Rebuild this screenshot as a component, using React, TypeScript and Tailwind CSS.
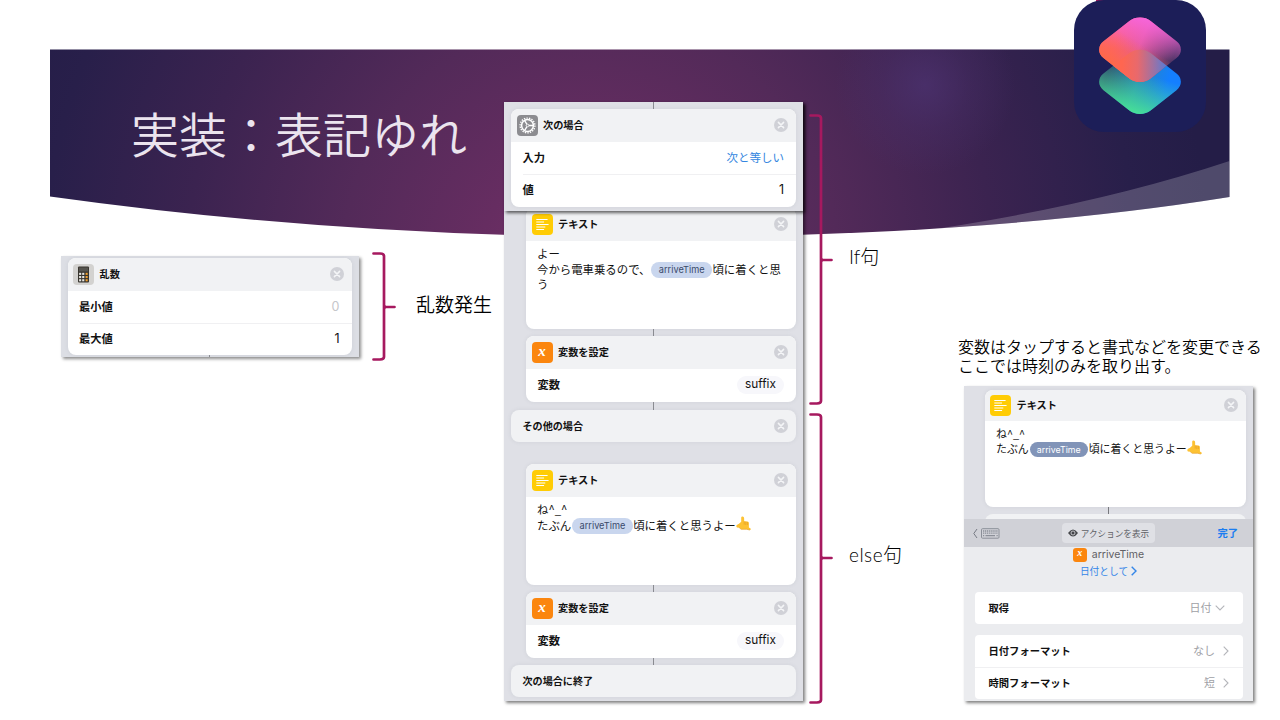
import type { ReactNode } from "react";

function CloseDot() {
  return (
    <svg className="-mt-px h-[14px] w-[14px] shrink-0" viewBox="0 0 14 14">
      <circle cx="7" cy="7" r="7" fill="#d0d1d7" />
      <path d="M4.400 4.400 9.600 9.600M9.600 4.400 4.400 9.600" stroke="#f4f5f7" strokeWidth="1.500" strokeLinecap="round" />
    </svg>
  );
}

function CalcIcon() {
  return (
    <svg className="h-[21px] w-[21px] shrink-0" viewBox="0 0 21 21">
      <rect width="21" height="21" rx="4" fill="#d3d2d0" />
      <rect x="5" y="2.5" width="11" height="16" rx="1" fill="#38352f" />
      <rect x="6" y="3.5" width="9" height="4" fill="#55534e" />
      {[8.8, 12, 15.2].map((y) => (
        <g key={y}>
          <rect x="6.1" y={y} width="2.1" height="2.1" fill="#e8e6e2" />
          <rect x="9.2" y={y} width="2.1" height="2.1" fill="#e8e6e2" />
          <rect x="12.6" y={y} width="2.1" height="2.1" fill="#f0a030" />
        </g>
      ))}
    </svg>
  );
}

function GearIcon() {
  return (
    <svg className="h-[21px] w-[21px] shrink-0" viewBox="0 0 21 21" fill="none" stroke="#fff">
      <rect width="21" height="21" rx="4" fill="#8c8c90" stroke="none" />
      <circle cx="10.5" cy="10.5" r="7.400" strokeWidth="1.400" strokeDasharray="1.400 1.180" />
      <circle cx="10.5" cy="10.5" r="5.900" strokeWidth="1.500" />
      <circle cx="10.5" cy="10.5" r="1.300" strokeWidth=".9" />
      <path d="M12 10.500h4.200M9.800 9.200 7.500 5.300M9.800 11.800l-2.300 3.900" strokeWidth="1.300" />
    </svg>
  );
}

function TextIcon() {
  return (
    <svg className="h-[21px] w-[21px] shrink-0" viewBox="0 0 21 21">
      <rect width="21" height="21" rx="4" fill="#ffcc05" />
      <path
        d="M4.700 5.500h10.500M4.700 8h7M4.700 10.500h11.500M4.700 13h8.200M4.700 15.500h7"
        stroke="#fff"
        strokeWidth="1"
        strokeLinecap="round"
      />
    </svg>
  );
}

function VarIcon({ small = false }: { small?: boolean }) {
  return (
    <span
      className={
        small
          ? "flex h-[14px] w-[14px] shrink-0 items-center justify-center rounded-[3px] bg-[#fb860e] font-['Liberation_Serif',serif] text-[10px] leading-none font-bold text-white italic"
          : "flex h-[21px] w-[21px] shrink-0 items-center justify-center rounded-[4px] bg-[#fb860e] font-['Liberation_Serif',serif] text-[15px] leading-none font-bold text-white italic"
      }
    >
      <span className="-mt-[3px]">x</span>
    </span>
  );
}

function HandIcon() {
  return (
    <svg className="-mt-[6px] inline-block h-[15px] w-[15px] align-middle" viewBox="0 0 15 15">
      <path
        d="M5.200 5.800V1.500Q5.300.3 6.700.4 8 .6 8.100 2L8.200 5.200 11.500 5.400Q12.900 5.600 12.900 7V11.500L14.600 12.500Q15.200 13.800 14 14L10.600 13.300H5.200L3.300 11.800 1 11.400Q.2 11 .4 9.800.5 8.800 1.700 8.500L3 7.800Z"
        fill="#fdc233"
      />
      <path d="M8.200 5.400V8.600M9.800 5.600V9M11.400 6V9M3.300 11.800 5.200 13.300H10.600L14 14" stroke="#e39a22" strokeWidth=".6" fill="none" />
    </svg>
  );
}

function Bracket({ height, nib }: { height: number; nib: number }) {
  return (
    <svg width="24" height={height} viewBox={`0 0 24 ${height}`} className="block shrink-0" fill="none">
      <path
        d={`M1.500 1.500H8Q12 1.700 12 4V${height - 4}Q12 ${height - 1.7} 8 ${height - 1.5}H1.500M12 ${nib}H22.500`}
        stroke="#a6195f"
        strokeWidth="2.700"
        strokeLinecap="round"
      />
      <path d={`M12 ${nib - 4}Q13 ${nib} 18 ${nib}Q13 ${nib} 12 ${nib + 4}Z`} fill="#a6195f" />
    </svg>
  );
}

function Header({ icon, title, compact = false }: { icon: ReactNode; title: string; compact?: boolean }) {
  return (
    <div
      className={
        compact
          ? "flex h-[31px] items-center bg-[#f1f2f4] pr-[8px] pl-[5px]"
          : "flex h-[33px] items-center bg-[#f1f2f4] pr-[8px] pl-[5.500px]"
      }
    >
      {icon}
      <span className="-mt-[2px] ml-[5.500px] flex-1 text-[10.200px] font-bold">{title}</span>
      <CloseDot />
    </div>
  );
}

function Card({
  children,
  tone = "bg-white",
  className = "",
}: {
  children: ReactNode;
  tone?: string;
  className?: string;
}) {
  return (
    <div className={`shrink-0 overflow-hidden rounded-[8px] shadow-[0_0_4px_rgba(80,85,110,0.10)] ${tone} ${className}`}>
      {children}
    </div>
  );
}

function Row({ label, children }: { label: string; children: ReactNode }) {
  return (
    <div className="flex h-[32px] items-center justify-between pr-[12px] pl-[11.500px]">
      <span className="-mt-[2px] text-[11.300px] font-bold">{label}</span>
      {children}
    </div>
  );
}

function Link({ className = "h-[7px]" }: { className?: string }) {
  return <div className={`ml-[149px] w-px shrink-0 bg-[#8b8c92] ${className}`} />;
}

function Pill() {
  return (
    <span className="-mt-[2px] mr-[.5px] ml-[1px] inline-flex h-[16px] w-[60.500px] items-center justify-center rounded-full bg-[#c9d6ee] align-middle font-[Inter,sans-serif] text-[9.200px] text-[#394a6b]">
      arriveTime
    </span>
  );
}

function SetVariable() {
  return (
    <Card className="ml-[22px] h-[66px] w-[270px]">
      <Header icon={<VarIcon />} title="変数を設定" />
      <Row label="変数">
        <span className="-mt-px flex h-[18px] w-[47px] items-center justify-center rounded-full bg-[#f7f7fb] font-[Inter,sans-serif] text-[11.800px]">
          suffix
        </span>
      </Row>
    </Card>
  );
}

function Banner() {
  return (
    <svg className="absolute inset-0 h-[720px] w-[1280px]" viewBox="0 0 1280 720">
      <defs>
        <radialGradient id="base" gradientUnits="userSpaceOnUse" cx="590" cy="265" r="620">
          <stop offset="0" stopColor="#763269" />
          <stop offset=".18" stopColor="#662d61" />
          <stop offset=".4" stopColor="#532a59" />
          <stop offset=".65" stopColor="#3b2350" />
          <stop offset=".88" stopColor="#281f4a" />
          <stop offset="1" stopColor="#241d47" />
        </radialGradient>
        <radialGradient id="glow" gradientUnits="userSpaceOnUse" cx="925" cy="85" r="90">
          <stop offset="0" stopColor="#4c3270" stopOpacity=".75" />
          <stop offset=".5" stopColor="#4c3270" stopOpacity=".3" />
          <stop offset="1" stopColor="#4c3270" stopOpacity="0" />
        </radialGradient>
        <clipPath id="shape">
          <path d="M50 49.500H1229.500V197Q980 237 640 237Q340 237 50 196.500Z" />
        </clipPath>
      </defs>
      <g clipPath="url(#shape)">
        <rect x="50" y="49" width="1180" height="190" fill="url(#base)" />
        <rect x="830" y="49" width="190" height="130" fill="url(#glow)" />
        <path d="M1229.500 161Q1085 209 900 234L1229.500 234Z" fill="#fff" fillOpacity=".2" />
      </g>
    </svg>
  );
}

function ShortcutsLogo() {
  return (
    <svg className="absolute top-0 left-[1074px] h-[132px] w-[132px]" viewBox="0 0 132 132">
      <defs>
        <linearGradient id="top" gradientUnits="userSpaceOnUse" x1="42" y1="40" x2="98" y2="62">
          <stop offset="0" stopColor="#fc5f74" />
          <stop offset=".4" stopColor="#e35a9a" />
          <stop offset="1" stopColor="#4d3464" />
        </linearGradient>
        <linearGradient id="pink" gradientUnits="userSpaceOnUse" x1="70" y1="17" x2="62" y2="54">
          <stop offset="0" stopColor="#f765dc" />
          <stop offset="1" stopColor="#f765dc" stopOpacity="0" />
        </linearGradient>
        <linearGradient id="orange" gradientUnits="userSpaceOnUse" x1="46" y1="72" x2="64" y2="42">
          <stop offset="0" stopColor="#ff6a45" />
          <stop offset="1" stopColor="#ff6a45" stopOpacity="0" />
        </linearGradient>
        <linearGradient id="bottom" gradientUnits="userSpaceOnUse" x1="36" y1="66" x2="94" y2="84">
          <stop offset="0" stopColor="#2f5070" />
          <stop offset=".5" stopColor="#2888b8" />
          <stop offset="1" stopColor="#147fff" />
        </linearGradient>
        <linearGradient id="green" gradientUnits="userSpaceOnUse" x1="60" y1="114" x2="72" y2="74">
          <stop offset="0" stopColor="#48e296" />
          <stop offset="1" stopColor="#48e296" stopOpacity="0" />
        </linearGradient>
        <linearGradient id="overlap" gradientUnits="userSpaceOnUse" x1="48" y1="66" x2="92" y2="66">
          <stop offset="0" stopColor="#ff6650" />
          <stop offset=".35" stopColor="#e9696c" />
          <stop offset=".7" stopColor="#a271a0" />
          <stop offset="1" stopColor="#5a7bd4" />
        </linearGradient>
        <clipPath id="upper">
          <rect x="-33.300" y="-33.300" width="66.600" height="66.600" rx="15" transform="translate(66 49.700) scale(1 .786) rotate(45)" />
        </clipPath>
        <clipPath id="lower">
          <rect x="-33.300" y="-33.300" width="66.600" height="66.600" rx="15" transform="translate(66 81.800) scale(1 .786) rotate(45)" />
        </clipPath>
      </defs>
      <rect x="22" y="0" width="20" height="8" fill="#a6195f" />
      <rect width="132" height="132" rx="30" fill="#1c1e58" />
      <g clipPath="url(#lower)">
        <rect x="20" y="45" width="92" height="74" fill="url(#bottom)" />
        <rect x="20" y="45" width="92" height="74" fill="url(#green)" />
      </g>
      <g clipPath="url(#upper)">
        <rect x="20" y="12" width="92" height="74" fill="url(#top)" />
        <rect x="20" y="12" width="92" height="74" fill="url(#pink)" />
        <rect x="20" y="12" width="92" height="74" fill="url(#orange)" />
        <g clipPath="url(#lower)">
          <rect x="20" y="45" width="92" height="45" fill="url(#overlap)" />
        </g>
      </g>
    </svg>
  );
}

function Chevron({ down = false }: { down?: boolean }) {
  return down ? (
    <svg className="h-[6px] w-[10px]" viewBox="0 0 10 6" fill="none" stroke="#b4b5ba" strokeWidth="1.100">
      <path d="M.7.7 5 5 9.300.7" />
    </svg>
  ) : (
    <svg className="h-[10px] w-[6px]" viewBox="0 0 6 10" fill="none" stroke="#b4b5ba" strokeWidth="1.100">
      <path d="M.7.7 5 5 .7 9.300" />
    </svg>
  );
}

function FormatRow({ label, value, down = false }: { label: string; value: string; down?: boolean }) {
  return (
    <div className="flex h-[32px] items-center pl-[13.500px]">
      <span className="flex-1 text-[10.300px] font-bold">{label}</span>
      <span className="-mt-px text-[11px] text-[#a0a1a6]">{value}</span>
      <span className={down ? "mr-[18px] ml-[3.500px]" : "mr-[14px] ml-[8px]"}>
        <Chevron down={down} />
      </span>
    </div>
  );
}

function RandomPanel() {
  return (
    <div className="mt-[4px] h-[101px] w-[298px] overflow-hidden bg-[#dcdee4] px-[6.500px] pt-[2px] shadow-[2px_2px_3px_rgba(0,0,0,0.45)]">
      <Card className="h-[97px] w-[284px]">
        <Header icon={<CalcIcon />} title="乱数" />
        <Row label="最小値">
          <span className="font-[Inter,sans-serif] text-[12.500px] text-[#c5c6ca]">0</span>
        </Row>
        <div className="-mb-px ml-[12px] h-px bg-[#f0f0f2]" />
        <Row label="最大値">
          <span className="font-[Inter,sans-serif] text-[12.500px]">1</span>
        </Row>
      </Card>
      <div className="ml-[141px] h-[2px] w-px bg-[#8b8c92]" />
    </div>
  );
}

function ShortcutPanel() {
  return (
    <div className="flex h-[599px] w-[299px] flex-col bg-[#dfe0e6] shadow-[2px_2px_3px_rgba(0,0,0,0.5)]">
      <div className="z-10 h-[109px] shrink-0 bg-[#dfe0e6] shadow-[2px_2px_3px_rgba(0,0,0,0.6)]">
        <Link />
        <Card className="ml-[7px] h-[98px] w-[285px]">
          <Header icon={<GearIcon />} title="次の場合" />
          <Row label="入力">
            <span className="text-[11.500px] text-[#3486e0]">次と等しい</span>
          </Row>
          <div className="-mb-px ml-[12px] h-px bg-[#f0f0f2]" />
          <Row label="値">
            <span className="font-[Inter,sans-serif] text-[12.500px]">1</span>
          </Row>
        </Card>
      </div>
      <div className="flex h-[490px] flex-col overflow-hidden">
        <Card className="-mt-[3px] ml-[22px] h-[121px] w-[270px]">
          <Header icon={<TextIcon />} title="テキスト" />
          <div className="pt-[5px] pl-[11px] text-[11.400px] leading-[15.700px] whitespace-nowrap">
            <div className="h-[15.700px]">よー</div>
            <div className="h-[15.700px]">
              今から電車乗るので、
              <Pill />
              頃に着くと思
            </div>
            <div>う</div>
          </div>
        </Card>
        <Link />
        <SetVariable />
        <Link className="h-[8px]" />
        <Card
          tone="bg-[#f1f2f4]"
          className="ml-[7px] flex h-[32px] w-[285px] items-center justify-between pr-[8px] pl-[11.500px] text-[10.100px] font-bold"
        >
          <span>その他の場合</span>
          <CloseDot />
        </Card>
        <Card className="mt-[22px] ml-[22px] h-[121px] w-[270px]">
          <Header icon={<TextIcon />} title="テキスト" />
          <div className="pt-[5px] pl-[11px] text-[11.400px] leading-[15.700px] whitespace-nowrap">
            <div className="h-[15.700px]">ね^_^</div>
            <div className="h-[15.700px]">
              たぶん
              <Pill />
              頃に着くと思うよー
              <HandIcon />
            </div>
          </div>
        </Card>
        <Link />
        <SetVariable />
        <Link />
        <Card
          tone="bg-[#f1f2f4]"
          className="ml-[7px] flex h-[32px] w-[285px] items-center pl-[11.500px] text-[10.100px] font-bold"
        >
          次の場合に終了
        </Card>
      </div>
    </div>
  );
}

function VariablePanel() {
  return (
    <div className="mt-[10px] ml-[6px] flex h-[315px] w-[289px] flex-col bg-[#ebecef] shadow-[2px_2px_3px_rgba(0,0,0,0.5)]">
      <div className="h-[133px] shrink-0 overflow-hidden bg-[#dfe0e6] pt-[4px]">
        <Card className="ml-[21px] h-[117px] w-[261px]">
          <Header compact icon={<TextIcon />} title="テキスト" />
          <div className="pt-[5px] pl-[11px] text-[10.900px] leading-[15px] whitespace-nowrap">
            <div className="h-[15px]">ね^_^</div>
            <div className="h-[15px]">
              たぶん
              <span className="-mt-[2px] mx-[1px] inline-flex h-[15px] w-[58px] items-center justify-center rounded-full bg-[#8194b8] align-middle font-[Inter,sans-serif] text-[8.800px] text-white">
                arriveTime
              </span>
              頃に着くと思うよー
              <HandIcon />
            </div>
          </div>
        </Card>
        <div className="ml-[144px] h-[7px] w-px bg-[#77787d]" />
        <div className="ml-[21px] h-[20px] w-[261px] rounded-[8px] bg-[#f1f2f4]" />
      </div>
      <div className="flex h-[28px] shrink-0 items-center bg-[#d0d1d7] pr-[15px] pl-[9px]">
        <svg className="h-[11px] w-[27px]" viewBox="0 0 27 11" fill="none" stroke="#8b8f98">
          <path d="M4 1 .8 5.500 4 10" stroke="#777b84" />
          <rect x="8.500" y=".7" width="17.500" height="9.500" rx="1" />
          <path d="M10 3h15M10 5.200h15" strokeDasharray="1.200 .7" strokeWidth="1.300" />
          <path d="M10 7.700h1.200M12.500 7.700h9.500M23.500 7.700h1.200" strokeWidth="1.200" />
        </svg>
        <div className="ml-[62px] flex h-[20px] w-[93px] items-center justify-center gap-[3px] rounded-[4px] bg-[#dfe0e5] text-[8.600px] whitespace-nowrap text-[#606166]">
          <svg className="h-[8px] w-[10px]" viewBox="0 0 10 8">
            <path d="M0 4Q5-3 10 4 5 11 0 4Z" fill="#45464a" />
            <circle cx="5" cy="4" r="2" fill="none" stroke="#dfe0e5" strokeWidth=".8" />
          </svg>
          アクションを表示
        </div>
        <span className="ml-auto text-[10.300px] font-bold text-[#1b7df0]">完了</span>
      </div>
      <div className="flex h-[15px] items-center justify-center gap-[5px]">
        <VarIcon small />
        <span className="font-[Inter,sans-serif] text-[10.500px] text-[#5f6064]">arriveTime</span>
      </div>
      <div className="flex h-[18px] items-center justify-center gap-[3px] text-[9.700px] text-[#3486e8]">
        日付として
        <svg className="h-[10px] w-[6px]" viewBox="0 0 6 10" fill="none" stroke="#3486e8" strokeWidth="1.400">
          <path d="M.7.7 5 5 .7 9.300" />
        </svg>
      </div>
      <div className="mt-[12px] ml-[11px] w-[268px] rounded-[4px] bg-white">
        <FormatRow label="取得" value="日付" down />
      </div>
      <div className="mt-[11px] ml-[11px] w-[268px] rounded-[4px] bg-white">
        <FormatRow label="日付フォーマット" value="なし" />
        <div className="-mb-px h-px bg-[#f0f0f2]" />
        <FormatRow label="時間フォーマット" value="短" />
      </div>
    </div>
  );
}

export default function App() {
  return (
    <main className="relative h-[720px] w-[1280px] overflow-hidden bg-white font-['Noto_Sans_CJK_JP',sans-serif] text-[#111]">
      <Banner />
      <div className="relative flex h-full">
        <section className="w-[504px] shrink-0 pt-[96px]">
          <h1 className="ml-[131px] h-[72px] text-[48px] leading-[72px] font-[350] whitespace-nowrap text-[#ebe4ee]">
            実装：表記ゆれ
          </h1>
          <div className="mt-[84px] ml-[61px] flex">
            <RandomPanel />
            <div className="ml-[13px]">
              <Bracket height={109} nib={55} />
            </div>
            <p className="mt-[39px] ml-[20px] text-[19px] leading-[26px] font-[350] whitespace-nowrap text-black">乱数発生</p>
          </div>
        </section>
        <section className="w-[299px] shrink-0 pt-[102px]">
          <ShortcutPanel />
        </section>
        <section className="flex w-[155px] shrink-0 flex-col gap-[8px] pt-[114px] pl-[6px]">
          <div className="flex">
            <Bracket height={291} nib={146} />
            <p className="mt-[130px] ml-[16px] font-[Lato,'Noto_Sans_CJK_JP',sans-serif] text-[19px] leading-[26px] font-light text-black">
              If句
            </p>
          </div>
          <div className="flex">
            <Bracket height={291} nib={145} />
            <p className="mt-[129px] ml-[16px] font-[Lato,'Noto_Sans_CJK_JP',sans-serif] text-[19px] leading-[26px] font-light text-black">
              <span className="tracking-[.5px]">else</span>句
            </p>
          </div>
        </section>
        <section className="flex-1 pt-[337px]">
          <p className="text-[16px] leading-[19px] font-[350] whitespace-nowrap text-black">
            変数はタップすると書式などを変更できる
            <br />
            ここでは時刻のみを取り出す。
          </p>
          <div className="h-px" />
          <VariablePanel />
        </section>
      </div>
      <ShortcutsLogo />
    </main>
  );
}
